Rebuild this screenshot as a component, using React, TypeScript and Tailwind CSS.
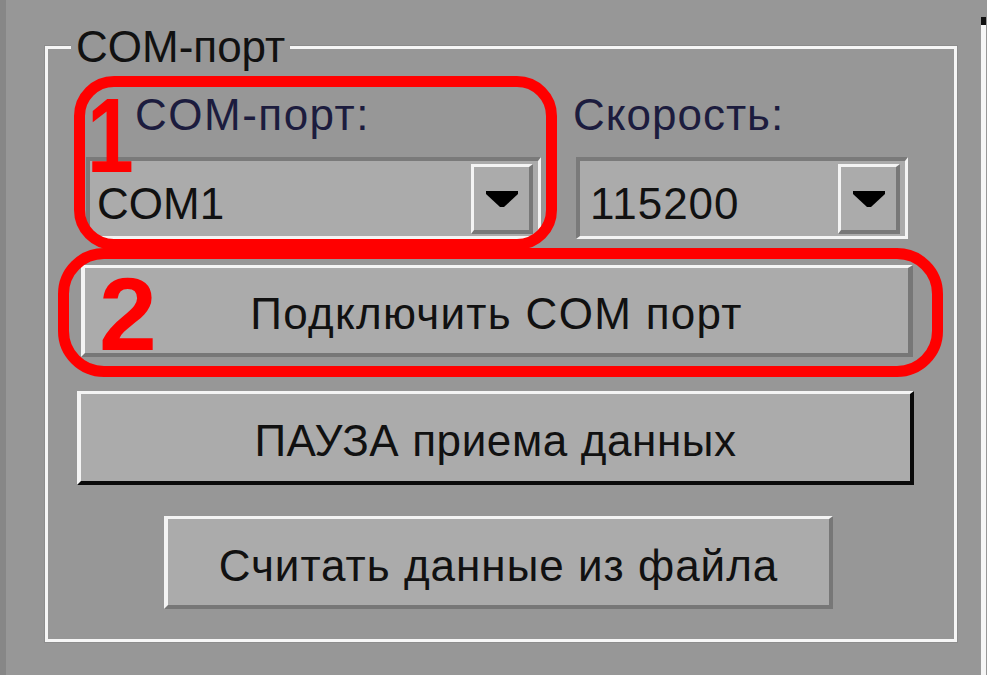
import React from "react";

const font = { fontFamily: '"Liberation Sans", Arial, sans-serif' };

function Arrow() {
  return (
    <svg width="32" height="16" viewBox="0 0 32 16">
      <polygon points="0,0 32,0 32,3 18,16 14,16 0,3" fill="#000" />
    </svg>
  );
}

function Combo({ value, pad }: { value: string; pad: string }) {
  return (
    <div className="h-[82px] flex items-stretch bg-[#ababab] border-t-[4px] border-l-[4px] border-r-[3px] border-b-[3px] border-t-[#7a7a7a] border-l-[#7a7a7a] border-r-[#f4f4f4] border-b-[#f4f4f4]">
      <div className={`flex-1 flex items-center pt-[10px] text-[44px] leading-[44px] text-[#111] ${pad}`}>
        {value}
      </div>
      <div className="mt-[3px] mb-[2px] mr-[5px] w-[62px] flex items-center justify-center bg-[#ababab] border-t-[3px] border-l-[3px] border-r-[4px] border-b-[4px] border-t-[#f4f4f4] border-l-[#f4f4f4] border-r-[#787878] border-b-[#787878]">
        <Arrow />
      </div>
    </div>
  );
}

export default function App() {
  return (
    <div
      className="relative w-[987px] h-[675px] overflow-hidden bg-[#979797] flex"
      style={font}
    >
      <div className="w-[6px] bg-[#878787] shrink-0" />
      <div className="pl-[39px] pt-[46px]">
        <div className="relative w-[912px] h-[596px] border-[3px] border-[#f6f6f6] shadow-[0_0_0_1px_#8c8c8c]">
          <div className="absolute left-[23px] top-[-24px] px-[5px] bg-[#979797] text-[44px] leading-[44px] text-[#111]">
            COM-порт
          </div>
          <div className="flex flex-col">
            <div className="mt-[44px] ml-[38px] flex gap-[35px]">
              <div className="w-[455px] flex flex-col gap-[20px]">
                <div className="pl-[49px] text-[44px] leading-[44px] tracking-[1.5px] text-[#1c1c3e]">
                  COM-порт:
                </div>
                <Combo value="COM1" pad="pl-[7px]" />
              </div>
              <div className="w-[332px] flex flex-col gap-[20px]">
                <div className="-ml-[3px] text-[44px] leading-[44px] tracking-[1px] text-[#1c1c3e]">
                  Скорость:
                </div>
                <Combo value="115200" pad="pl-[10px] tracking-[1px]" />
              </div>
            </div>
            <button className="mt-[26px] ml-[33px] w-[832px] h-[92px] flex items-center justify-center pt-[7px] bg-[#ababab] border-t-[3px] border-l-[4px] border-r-[5px] border-b-[4px] border-t-[#f4f4f4] border-l-[#f4f4f4] border-r-[#777] border-b-[#777] text-[44px] leading-[44px] tracking-[1.3px] text-[#111]">
              Подключить COM порт
            </button>
            <button className="mt-[34px] ml-[29px] w-[837px] h-[94px] flex items-center justify-center pt-[7px] bg-[#ababab] border-t-[3px] border-l-[4px] border-r-[4px] border-b-[4px] border-t-[#f4f4f4] border-l-[#f4f4f4] border-r-[#0a0a0a] border-b-[#0a0a0a] text-[44px] leading-[44px] tracking-[0.6px] text-[#111]">
              ПАУЗА приема данных
            </button>
            <button className="mt-[31px] ml-[116px] w-[669px] h-[93px] flex items-center justify-center pt-[7px] bg-[#ababab] border-t-[3px] border-l-[4px] border-r-[4px] border-b-[4px] border-t-[#f4f4f4] border-l-[#f4f4f4] border-r-[#777] border-b-[#777] text-[44px] leading-[44px] tracking-[1px] text-[#111]">
              Считать данные из файла
            </button>
          </div>
        </div>
      </div>
      <div className="ml-[24px] pt-[17px] flex flex-col w-[5px]">
        <div className="h-[8px] bg-[#111]" />
        <div className="flex-1 bg-[#f6f6f6]" />
      </div>

      {/* annotation overlays */}
      <div className="absolute left-[74px] top-[76px] w-[483px] h-[174px] border-[11px] border-[#ff0000] rounded-[40px]" />
      <div className="absolute left-[58px] top-[248px] w-[885px] h-[129px] border-[11px] border-[#ff0000] rounded-[46px]" />
      <div className="absolute left-[87px] top-[98px] text-[105px] leading-[76px] font-bold text-[#ff0000] scale-x-[0.8] origin-left">
        1
      </div>
      <div className="absolute left-[99px] top-[262px] text-[104px] leading-[104px] font-bold text-[#ff0000]">
        2
      </div>
    </div>
  );
}
